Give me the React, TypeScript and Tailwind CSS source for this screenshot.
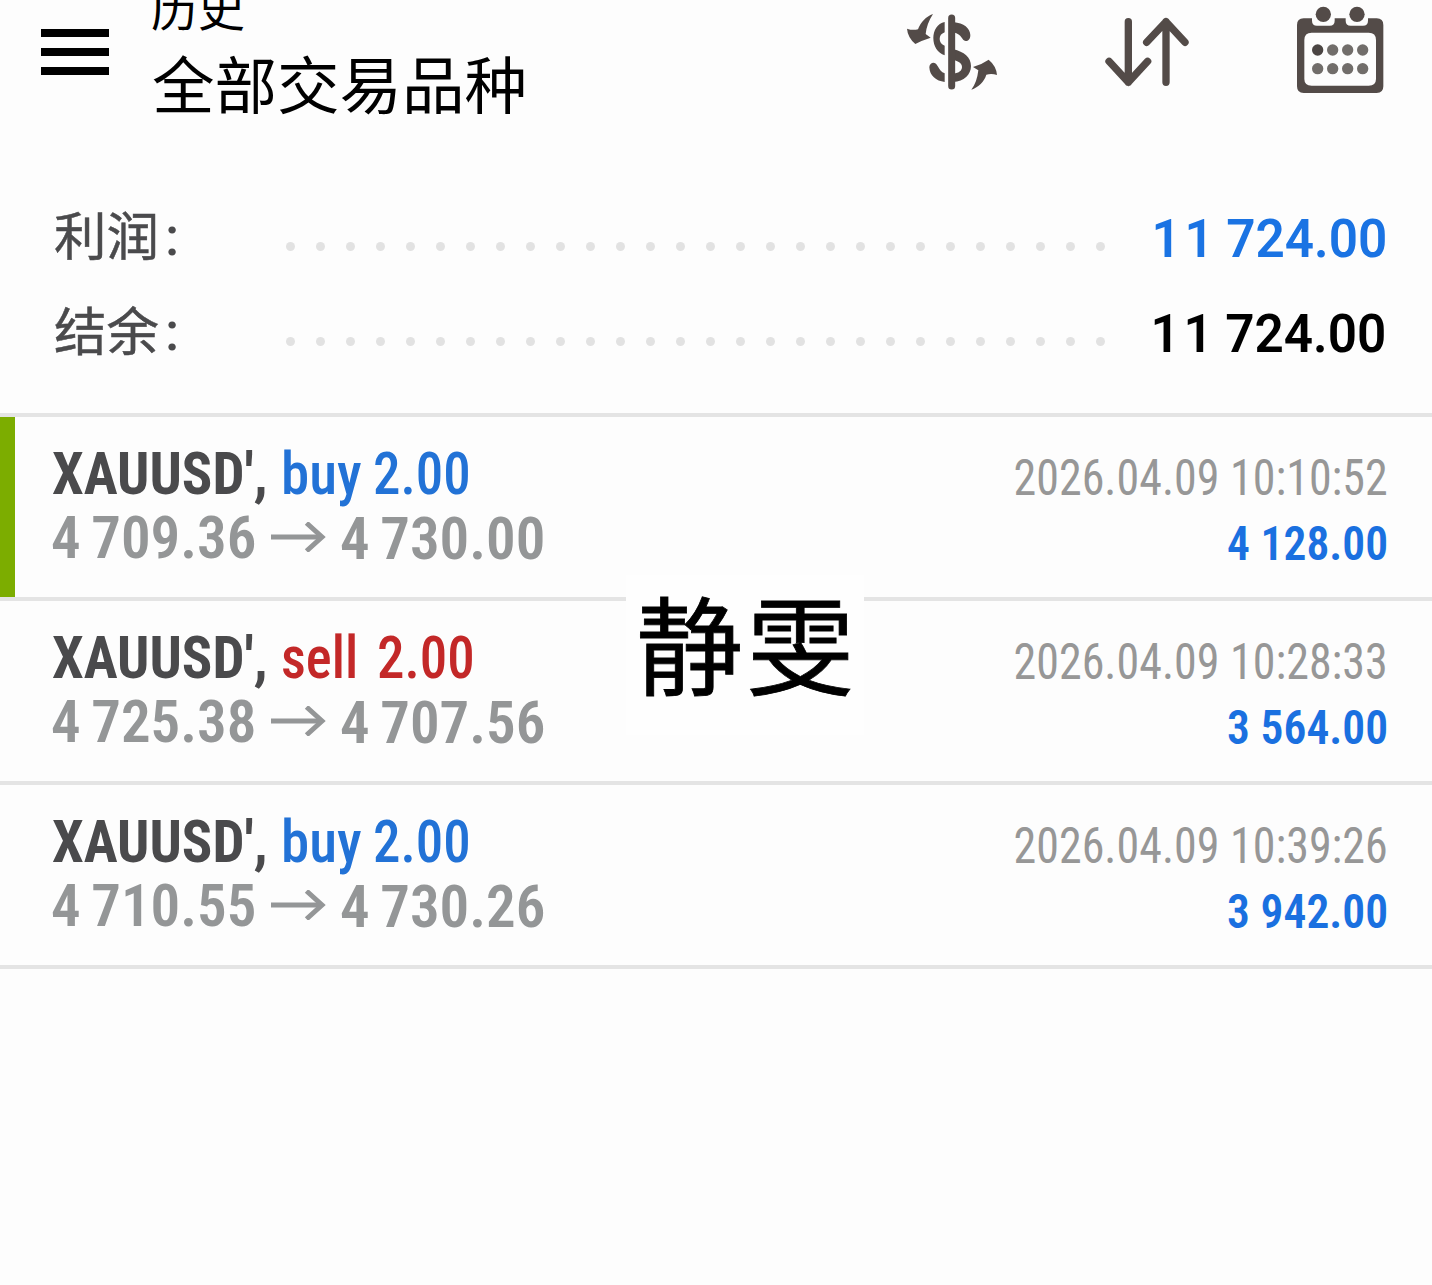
import { clsx } from 'clsx';

type Deal = {
  symbol: string;
  side: 'buy' | 'sell';
  volume: string;
  open: string;
  close: string;
  time: string;
  profit: string;
  marked?: boolean;
};

const DEALS: Deal[] = [
  { symbol: "XAUUSD'", side: 'buy',  volume: '2.00', open: '4 709.36', close: '4 730.00', time: '2026.04.09 10:10:52', profit: '4 128.00', marked: true },
  { symbol: "XAUUSD'", side: 'sell', volume: '2.00', open: '4 725.38', close: '4 707.56', time: '2026.04.09 10:28:33', profit: '3 564.00' },
  { symbol: "XAUUSD'", side: 'buy',  volume: '2.00', open: '4 710.55', close: '4 730.26', time: '2026.04.09 10:39:26', profit: '3 942.00' },
];

const SUMMARY = [
  { label: '利润', thousands: '11', rest: '724.00', color: 'text-[#1a73e3] pr-[45px]' },
  { label: '结余', thousands: '11', rest: '724.00', color: 'text-black pr-[46px]' },
];

const DOTS = Array.from({ length: 28 }, (_, i) => i);

function CurrencyIcon() {
  return (
    <svg width="130" height="110" viewBox="0 0 390 330" fill="#534b48" aria-hidden="true">
      <path d="M129 42C108 50 92 66 84 88Q68 92 51 86Q53 112 76 132Q96 121 122 113L107 102C109 82 116 62 129 42Z" />
      <path d="M244 269C256 254 262 235 265 211L249 201Q276 193 296 179Q319 198 321 225Q305 220 289 224C282 246 266 261 244 269Z" />
      <path d="M164 66C142 71 130 91 130 114C130 140 143 158 164 166V137C154 133 149 126 149 117C149 107 154 101 164 97Z" />
      <path d="M190 66C222 70 240 84 241 105C241 117 235 123 227 123C214 122 218 103 190 97Z" />
      <path d="M190 148C222 155 243 173 243 198C243 224 222 244 190 246V221C208 219 216 211 216 201C216 191 208 184 190 180Z" />
      <path d="M118 202C118 194 124 188 131 188C145 189 144 213 164 220V246C138 243 119 227 118 202Z" />
      <path d="M185 54V258" stroke="#534b48" strokeWidth="21" strokeLinecap="round" />
    </svg>
  );
}

function SortIcon() {
  return (
    <svg width="120" height="110" viewBox="0 0 360 330" fill="none" stroke="#534b48" strokeWidth="22" strokeLinecap="round" strokeLinejoin="round" aria-hidden="true">
      <path d="M115 65V247M57 184L115 247L173 184" />
      <path d="M228 247V65M170 127L228 65L285 127" />
    </svg>
  );
}

function CalendarIcon() {
  return (
    <svg width="120" height="110" viewBox="0 0 360 330" fill="#534b48" aria-hidden="true">
      <path
        fillRule="evenodd"
        d="M71 55H96V62Q96 77 111 77H149Q164 77 164 62V55H197V62Q197 77 212 77H249Q264 77 264 62V55H290Q310 55 310 75V259Q310 279 290 279H71Q51 279 51 259V75Q51 55 71 55ZM95 98Q73 98 73 120V237Q73 257 95 257H266Q288 257 288 237V120Q288 98 266 98Z"
      />
      <circle cx="130" cy="43" r="23" />
      <circle cx="231" cy="43" r="23" />
      {[150, 206].map(cy =>
        [113, 158, 203, 248].map(cx => (
          <circle key={`${cx}-${cy}`} cx={cx} cy={cy} r="17" fill={cx === 113 && cy === 150 ? '#4b4543' : '#716d6a'} />
        ))
      )}
    </svg>
  );
}

function Arrow() {
  return (
    <svg width="56" height="30" viewBox="0 0 56 30" className="mt-[14px]" fill="none" stroke="#949697" aria-hidden="true">
      <path d="M0 15H51" strokeWidth="5" />
      <path d="M35.5 1L51 15L35.5 29" strokeWidth="5" />
    </svg>
  );
}

function DealRow({ deal }: { deal: Deal }) {
  const buy = deal.side === 'buy';
  return (
    <li className="flex h-[184px] border-b-4 border-[#e4e4e4] leading-none whitespace-nowrap">
      <div className={clsx('w-[15px]', deal.marked && 'bg-[#7cad00]')} />
      <div className="flex-1 pt-[27px] pl-[37px] font-stretch-[75%]">
        <div className="flex h-16 text-[60px]">
          <span className="w-[229px] origin-left scale-x-[0.945] font-bold text-[#4a4a4c]">{deal.symbol},</span>
          <span className={clsx('flex', buy ? 'text-[#2272d6]' : 'text-[#c32828]')}>
            <span className={clsx('origin-left font-[460]', buy ? 'w-[92px] scale-x-[0.95]' : 'w-[96px] scale-x-[0.91]')}>{deal.side}</span>
            <span className="origin-left scale-x-[0.915] font-[460]">{deal.volume}</span>
          </span>
        </div>
        <div className="flex text-[59px] font-semibold text-[#949697]">
          <span className="-ml-px w-[220px] [word-spacing:-3px]">{deal.open}</span>
          <Arrow />
          <span className="ml-[13px] pt-px [word-spacing:-3px]">{deal.close}</span>
        </div>
      </div>
      <div className="flex flex-col items-end pt-9 pr-11 font-stretch-[75%]">
        <span className="h-[66px] origin-right scale-x-[0.92] text-[50px] font-[390] text-[#979797]">{deal.time}</span>
        <span className="origin-right scale-x-[0.93] text-[49px] font-semibold text-[#1a70e0]">{deal.profit}</span>
      </div>
    </li>
  );
}

export default function App() {
  return (
    <div className="relative h-[1285px] w-[1432px] overflow-hidden bg-[#fdfdfd] font-[Roboto,'Noto_Sans_CJK_SC',sans-serif]">
      {/* Top bar */}
      <header className="flex h-[190px] pl-[41px]">
        <button className="flex h-[75px] w-[68px] flex-col justify-end gap-[11px]" aria-label="Menu">
          <span className="h-2 w-full bg-black" />
          <span className="h-2 w-full bg-black" />
          <span className="h-2 w-full bg-black" />
        </button>
        <div className="-mt-[18px] ml-[43px] flex-1 font-['Noto_Sans_CJK_SC',sans-serif] leading-none text-black">
          <p className="-ml-px h-[69px] text-[47px]">历史</p>
          <h1 className="text-[62.5px]">全部交易品种</h1>
        </div>
        <div className="flex gap-[70px] pr-8">
          <CurrencyIcon />
          <SortIcon />
          <CalendarIcon />
        </div>
      </header>

      {/* Totals */}
      <section className="h-[223px] leading-none">
        {SUMMARY.map(row => (
          <div key={row.label} className="flex h-[95px] pl-[54px]">
            <div className="flex w-[231.5px] pt-[20px] text-[#4a4a4c]">
              <span className="pt-[2px] text-[52.5px] [-webkit-text-stroke:0.5px_#4a4a4c]">{row.label}</span>
              <span className="ml-[6px] text-[54px] font-medium">:</span>
            </div>
            <div className="mt-[52px] flex gap-[21px]">
              {DOTS.map(i => <span key={i} className="size-[9px] rounded-full bg-[#e2e2e2]" />)}
            </div>
            <div className={clsx('flex flex-1 justify-end pt-[22px] text-[54px] font-[650]', row.color)}>
              <span className="flex origin-right scale-x-[0.95]">
                <span className="tracking-[4px]">{row.thousands}</span>
                <span className="ml-[9px]">{row.rest}</span>
              </span>
            </div>
          </div>
        ))}
      </section>

      {/* Deals */}
      <ul className="border-t-4 border-[#e4e4e4]">
        {DEALS.map(deal => <DealRow key={deal.time} deal={deal} />)}
      </ul>

      {/* Name label over the list */}
      <div className="absolute top-[575px] left-[626px] h-[160px] w-[238px] bg-[#fefefe] pt-[12px] pl-[10px] font-['Noto_Sans_CJK_SC',sans-serif] text-[107px] leading-none tracking-[4px] text-black [-webkit-text-stroke:0.8px_black]">
        静雯
      </div>
    </div>
  );
}
